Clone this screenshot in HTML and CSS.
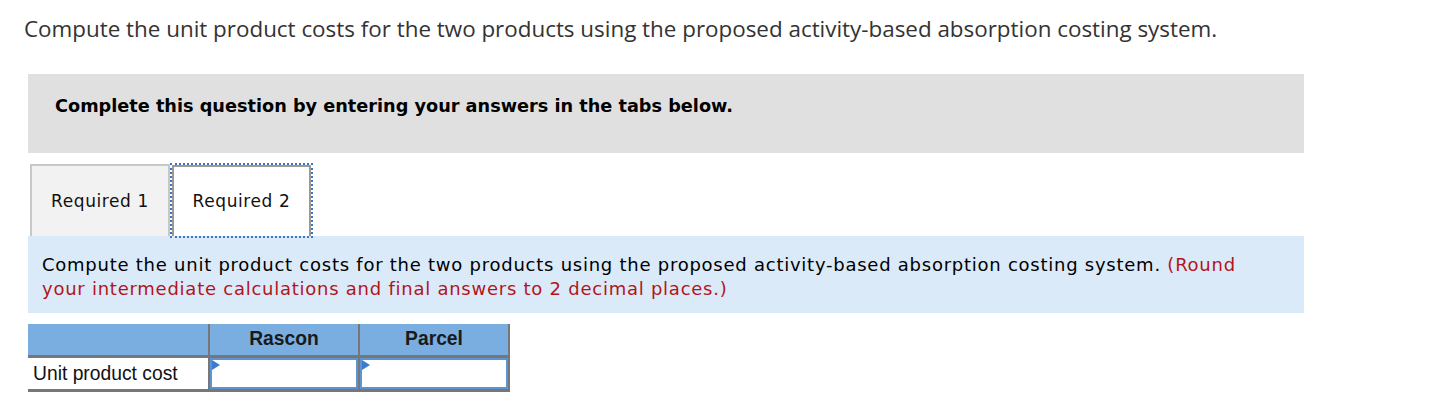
FILE: index.html
```html
<!DOCTYPE html>
<html>
<head>
<meta charset="utf-8">
<link rel="stylesheet" href="styles.css">
</head>
<body>
<div class="page">
  <p class="title">Compute the unit product costs for the two products using the proposed activity-based absorption costing system.</p>
  <div class="panel">
    <div class="instr">Complete this question by entering your answers in the tabs below.</div>
    <div class="tabs">
      <div class="tab">Required 1</div>
      <div class="tab active">Required 2</div>
    </div>
    <div class="prompt">Compute the unit product costs for the two products using the proposed activity-based absorption costing system. <span class="note">(Round your intermediate calculations and final answers to 2 decimal places.)</span></div>
    <table class="grid">
      <tr class="head">
        <th class="lbl"></th>
        <th>Rascon</th>
        <th>Parcel</th>
      </tr>
      <tr>
        <td class="lbl">Unit product cost</td>
        <td class="inp"><div class="box"><span class="flag"></span></div></td>
        <td class="inp"><div class="box"><span class="flag"></span></div></td>
      </tr>
    </table>
  </div>
</div>
</body>
</html>
```
FILE: styles.css
```css
html, body { margin: 0; padding: 0; background: #fff; }
.page { padding: 14px 0 0 24px; }
.title {
  margin: 0;
  font-family: "Open Sans", sans-serif;
  font-size: 22.4px;
  line-height: 30px;
  color: #333;
}
.panel { margin: 30px 0 0 4px; width: 1276px; }
.instr {
  background: #e0e0e0;
  height: 79px;
  box-sizing: border-box;
  padding: 20px 0 0 27px;
  font-family: "DejaVu Sans", Verdana, sans-serif;
  font-weight: bold;
  font-size: 17.7px;
  line-height: 24px;
  color: #000;
}
.tabs { display: flex; margin-top: 11px; padding-left: 2px; align-items: flex-end; }
.tab {
  box-sizing: border-box;
  height: 72px;
  width: 140px;
  background: #f2f2f2;
  border: 2px solid #c8c8c8;
  border-bottom: 0;
  font-family: "DejaVu Sans", Verdana, sans-serif;
  font-size: 17px;
  letter-spacing: 0.6px;
  color: #111;
  display: flex;
  align-items: center;
  justify-content: center;
}
.tab.active {
  width: 139px;
  height: 71px;
  background: #fff;
  border: 2px solid #999;
  border-bottom: 0;
  outline: 2px dotted #3b76c0;
  margin-left: 2px;
  padding-bottom: 1px;
}
.prompt {
  background: #dbeaf8;
  box-sizing: border-box;
  height: 77px;
  padding: 17px 40px 0 14px;
  font-family: "DejaVu Sans", Verdana, sans-serif;
  font-size: 18px;
  letter-spacing: 0.75px;
  line-height: 24px;
  color: #000;
}
.note { color: #b3141c; }
.grid {
  margin-top: 11px;
  border-collapse: collapse;
  font-family: "Liberation Sans", Arial, sans-serif;
  font-size: 19.3px;
}
.grid th {
  background: #7aaee1;
  height: 32px;
  width: 150px;
  padding: 0;
  border-left: 2px solid #777;
  border-bottom: 3px solid #777;
  border-right: 2px solid #777;
  font-weight: bold;
  color: #1a1a1a;
  box-sizing: border-box;
}
.grid th.lbl { width: 181px; border-left: 0; }
.grid td {
  height: 34px;
  padding: 0;
  border-bottom: 3px solid #777;
  box-sizing: border-box;
}
.grid td.lbl { padding-left: 5px; padding-top: 1px; color: #111; }
.grid td.inp { border-left: 2px solid #777; border-right: 2px solid #777; }
.box {
  position: relative;
  height: 31px;
  box-sizing: border-box;
  border: 2px solid #5b93d3;
  background: #fff;
}
.flag {
  position: absolute;
  left: 0;
  top: 0;
  width: 0;
  height: 0;
  border-top: 5px solid transparent;
  border-bottom: 5px solid transparent;
  border-left: 8px solid #3d7bd0;
}
```
